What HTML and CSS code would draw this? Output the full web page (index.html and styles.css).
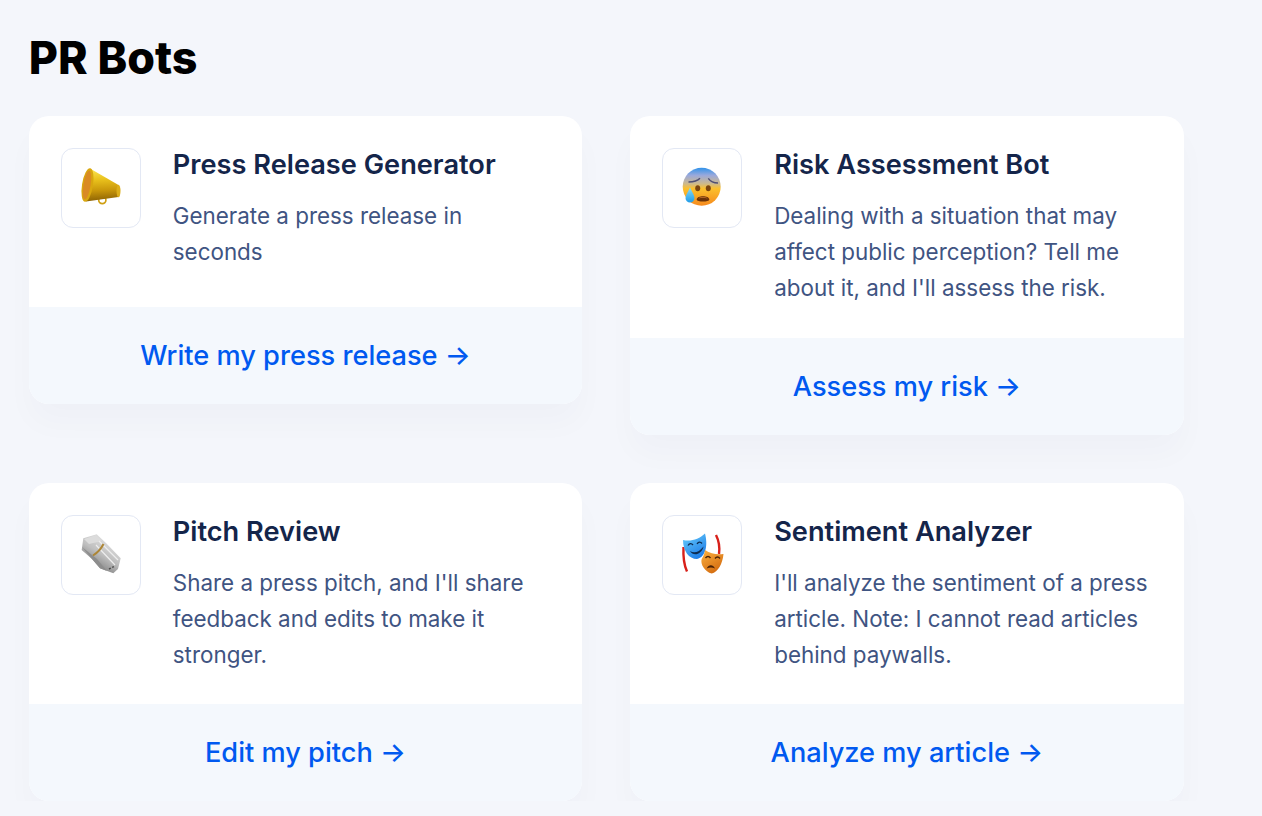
FILE: index.html
```html
<!DOCTYPE html>
<html lang="en">
<head>
    <meta charset="UTF-8">
    <meta name="viewport" content="width=device-width, initial-scale=1.0">
    <title>PR Bots</title>
    <link rel="stylesheet" href="styles.css">
</head>
<body>
    <main class="page">
        <h1 class="page-title">PR Bots</h1>
        <section class="bot-grid">
            <!-- Press release -->
            <article class="bot-card">
                <div class="bot-body">
                    <div class="bot-icon">
                        <svg width="44" height="44" viewBox="0 0 44 44">
                            <defs>
                                <linearGradient id="hornGold" x1="0.45" y1="0.05" x2="0.5" y2="1">
                                    <stop offset="0" stop-color="#f8e04a"/>
                                    <stop offset="0.3" stop-color="#e9c11c"/>
                                    <stop offset="0.65" stop-color="#c8960a"/>
                                    <stop offset="1" stop-color="#8a6004"/>
                                </linearGradient>
                            </defs>
                            <circle cx="23.3" cy="34" r="3.600" fill="none" stroke="#cf9f12" stroke-width="1.700"/>
                            <path d="M11 2.500 L39.500 19 L39.500 31 L7 35.500 Z" fill="url(#hornGold)"/>
                            <ellipse cx="39.500" cy="25" rx="2" ry="6.300" fill="#dcae1a"/>
                            <ellipse cx="8.500" cy="19" rx="5.500" ry="17" transform="rotate(9 8.500 19)" fill="#d9a70f"/>
                            <ellipse cx="8" cy="19" rx="3.600" ry="14.500" transform="rotate(9 8 19)" fill="#d98a24"/>
                        </svg>
                    </div>
                    <div class="bot-text">
                        <h2>Press Release Generator</h2>
                        <p>Generate a press release in seconds</p>
                    </div>
                </div>
                <a class="bot-link" href="#">Write my press release <span class="arrow">→</span></a>
            </article>

            <!-- Risk -->
            <article class="bot-card">
                <div class="bot-body">
                    <div class="bot-icon">
                        <svg width="44" height="44" viewBox="0 0 44 44">
                            <defs>
                                <linearGradient id="faceFill" x1="0" y1="0" x2="0" y2="1">
                                    <stop offset="0" stop-color="#2f92ea"/>
                                    <stop offset="0.2" stop-color="#9aa9dc"/>
                                    <stop offset="0.42" stop-color="#cdb98c"/>
                                    <stop offset="0.55" stop-color="#fbc02d"/>
                                    <stop offset="1" stop-color="#f68a1e"/>
                                </linearGradient>
                                <linearGradient id="dropFill" x1="0" y1="0" x2="0" y2="1">
                                    <stop offset="0" stop-color="#8adcf9"/>
                                    <stop offset="1" stop-color="#1f9ce8"/>
                                </linearGradient>
                            </defs>
                            <circle cx="21.700" cy="20.700" r="19" fill="url(#faceFill)"/>
                            <path d="M8.500 16c4.500 0 9 -1 11.500 -3.700M38 17c-4.500 0 -7.500 -1.500 -9.700 -4.700" fill="none" stroke="#4f4f73" stroke-width="1.400"/>
                            <ellipse cx="17.700" cy="22.300" rx="2.500" ry="3" fill="#7a4510"/>
                            <ellipse cx="28.300" cy="22.300" rx="2.500" ry="3" fill="#7a4510"/>
                            <path d="M16.700 33.500c0 -4.500 12.600 -4.500 12.600 0c0 2.800 -12.600 2.800 -12.600 0z" fill="#6b3208"/>
                            <path d="M18.500 32.500c0 -1.800 9 -1.800 9 0c-2.500 -0.600 -6.500 -0.600 -9 0z" fill="#c9762f"/>
                            <path d="M10 21.500c1.800 4 4.500 7.500 4.500 10.500a4.500 4.500 0 0 1 -9 0c0 -3 2.700 -6.500 4.500 -10.500z" fill="url(#dropFill)"/>
                        </svg>
                    </div>
                    <div class="bot-text">
                        <h2>Risk Assessment Bot</h2>
                        <p>Dealing with a situation that may affect public perception? Tell me about it, and I'll assess the risk.</p>
                    </div>
                </div>
                <a class="bot-link" href="#">Assess my risk <span class="arrow">→</span></a>
            </article>

            <!-- Pitch -->
            <article class="bot-card">
                <div class="bot-body">
                    <div class="bot-icon">
                        <svg width="44" height="44" viewBox="0 0 44 44">
                            <defs>
                                <linearGradient id="paperFill" x1="0.75" y1="0.1" x2="0.25" y2="0.9">
                                    <stop offset="0" stop-color="#e4e4e4"/>
                                    <stop offset="0.5" stop-color="#bfbfbf"/>
                                    <stop offset="1" stop-color="#767676"/>
                                </linearGradient>
                            </defs>
                            <path d="M4.300 5.300 L17.700 1.300 L27 10 L41.700 25.300 L39 36 L34.300 40.300 L21 35.300 L13 26 L2.700 17 Z" fill="url(#paperFill)"/>
                            <path d="M5 6 L17 2 L23 8 L10 11 Z" fill="#dcdcdc"/>
                            <path d="M3 14 L13 26 L21 35.300 L28 38 L18 26 Z" fill="#8d8d8d"/>
                            <path d="M20 8 L39 27 M17 12 L36 32" stroke="#ededed" stroke-width="1.200" fill="none"/>
                            <path d="M14 22.500 C18 20 22 16 24.500 11" stroke="#ad8636" stroke-width="2" fill="none"/>
                            <path d="M30 36 L36 33" stroke="#4d4d4d" stroke-width="1.400" stroke-dasharray="2 1.500"/>
                        </svg>
                    </div>
                    <div class="bot-text">
                        <h2>Pitch Review</h2>
                        <p>Share a press pitch, and I'll share feedback and edits to make it stronger.</p>
                    </div>
                </div>
                <a class="bot-link" href="#">Edit my pitch <span class="arrow">→</span></a>
            </article>

            <!-- Sentiment -->
            <article class="bot-card">
                <div class="bot-body">
                    <div class="bot-icon">
                        <svg width="44" height="44" viewBox="0 0 44 44">
                            <defs>
                                <linearGradient id="blueMask" x1="0.2" y1="0" x2="0.8" y2="1">
                                    <stop offset="0" stop-color="#63c8fa"/>
                                    <stop offset="1" stop-color="#1a78e6"/>
                                </linearGradient>
                                <linearGradient id="orangeMask" x1="0.2" y1="0" x2="0.8" y2="1">
                                    <stop offset="0" stop-color="#f9ac3c"/>
                                    <stop offset="1" stop-color="#d0660c"/>
                                </linearGradient>
                            </defs>
                            <path d="M3.500 14 C3 24 4 32 7 38.500 M36 2 C39 8 40 14 39 21" fill="none" stroke="#d8201a" stroke-width="2.400"/>
                            <path d="M3 7 C11 9 19 6 25 0.500 C28 12 26 24 17 26 C9 26 3 18 3 7Z" fill="url(#blueMask)"/>
                            <path d="M8 12.500c1.500 -2.500 3.500 -2.500 5 -.5M17 11c1.500 -2.500 3.500 -2.500 5 -.5" fill="none" stroke="#0e2c52" stroke-width="1.300"/>
                            <path d="M10 18c4 2.500 9 1.500 13.500 -4.500c-1 7 -10 11 -13.500 4.500z" fill="#0e2c52"/>
                            <path d="M25 17 C31 21 37 22 43.500 21 C42.500 31 38 39 31.700 40.500 C25 39 20 31 21.700 26 C23 24 24.500 21 25 17Z" fill="url(#orangeMask)"/>
                            <path d="M25.500 25c1.500 -2 3.500 -2 5 0M35 25.500c1.500 -2 3.500 -2 5 0" fill="none" stroke="#4a2206" stroke-width="1.300"/>
                            <path d="M26.700 35.500c2 -4 6 -4.500 8.300 0c-2.500 -1.500 -5.500 -1.500 -8.300 0z" fill="#4a2206"/>
                        </svg>
                    </div>
                    <div class="bot-text">
                        <h2>Sentiment Analyzer</h2>
                        <p>I'll analyze the sentiment of a press article. Note: I cannot read articles behind paywalls.</p>
                    </div>
                </div>
                <a class="bot-link" href="#">Analyze my article <span class="arrow">→</span></a>
            </article>
        </section>
    </main>
</body>
</html>
```

FILE: styles.css
```css
body {
    margin: 0;
    background-color: #f4f6fb;
    font-family: Inter, "Liberation Sans", sans-serif;
    overflow: hidden;
}
.page {
    width: 1154.8px;
    padding: 32px 0 0 28.8px;
}
.page-title {
    margin: 0 0 32px;
    font-size: 44.8px;
    line-height: 52px;
    font-weight: 800;
    color: #000;
}
.bot-grid {
    display: grid;
    grid-template-columns: 1fr 1fr;
    gap: 48px;
    align-items: start;
}
.bot-card {
    display: flex;
    flex-direction: column;
    min-height: 288px;
    background-color: #fff;
    border-radius: 20px;
    overflow: hidden;
    box-shadow: 0 20px 30px rgba(30, 40, 70, 0.025);
}
.bot-body {
    flex: 1;
    display: flex;
    gap: 32px;
    padding: 32px 32px 31.6px;
}
.bot-icon {
    flex: none;
    display: flex;
    align-items: center;
    justify-content: center;
    width: 78px;
    height: 78px;
    border: 1px solid #e3e8f4;
    border-radius: 12px;
}
.bot-text h2 {
    margin: 0 0 16px;
    font-size: 27.2px;
    line-height: 34px;
    font-weight: 600;
    color: #14254a;
}
.bot-text p {
    margin: 0;
    font-size: 22.4px;
    line-height: 36px;
    color: #3f5482;
}
.bot-link {
    display: block;
    padding: 30px 32px;
    background-color: #f4f8fd;
    font-size: 27.2px;
    line-height: 37px;
    font-weight: 500;
    color: #0059f0;
    text-align: center;
    text-decoration: none;
}
```
